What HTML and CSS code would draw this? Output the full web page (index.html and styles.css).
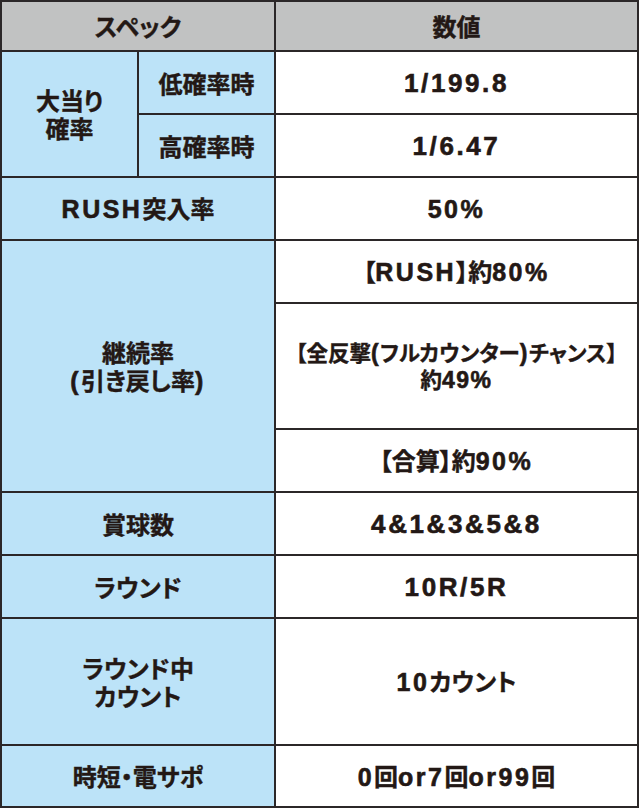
FILE: index.html
```html
<!DOCTYPE html>
<html lang="ja">
<head>
<meta charset="utf-8">
<title>スペック</title>
<link rel="stylesheet" href="styles.css">
</head>
<body>
<div class="spec">
  <div class="cell head h-spec"><div class="t">スペック</div></div>
  <div class="cell head h-val"><div class="t">数値</div></div>

  <div class="cell label oa"><div class="t">大当り<br>確率</div></div>
  <div class="cell label sub r1"><div class="t">低確率時</div></div>
  <div class="cell val r1"><div class="t"><span class="en num">1/199.8</span></div></div>
  <div class="cell label sub r2"><div class="t">高確率時</div></div>
  <div class="cell val r2"><div class="t"><span class="en num">1/6.47</span></div></div>

  <div class="cell label wide r3"><div class="t"><span class="en">RUSH</span>突入率</div></div>
  <div class="cell val r3"><div class="t"><span class="en">50%</span></div></div>

  <div class="cell label wide keizoku"><div class="t">継続率<br><span class="en">(</span>引き戻し率<span class="en">)</span></div></div>
  <div class="cell val r4"><div class="t">【<span class="en">RUSH</span>】約<span class="en">80%</span></div></div>
  <div class="cell val r5"><div class="t small">【全反撃<span class="en">(</span>フルカウンター<span class="en">)</span>チャンス】<br>約<span class="en">49%</span></div></div>
  <div class="cell val r6"><div class="t">【合算】約<span class="en">90%</span></div></div>

  <div class="cell label wide r7"><div class="t">賞球数</div></div>
  <div class="cell val r7"><div class="t"><span class="en num">4&amp;1&amp;3&amp;5&amp;8</span></div></div>

  <div class="cell label wide r8"><div class="t">ラウンド</div></div>
  <div class="cell val r8"><div class="t"><span class="en num">10R/5R</span></div></div>

  <div class="cell label wide r9"><div class="t">ラウンド中<br>カウント</div></div>
  <div class="cell val r9"><div class="t"><span class="en">10</span>カウント</div></div>

  <div class="cell label wide r10"><div class="t">時短・電サポ</div></div>
  <div class="cell val r10"><div class="t"><span class="en">0</span>回<span class="en">or7</span>回<span class="en">or99</span>回</div></div>
</div>
</body>
</html>
```

FILE: styles.css
```css
html, body {
  margin: 0;
  padding: 0;
  background: #ffffff;
}

.spec {
  width: 639px;
  box-sizing: border-box;
  display: grid;
  grid-template-columns: 135px 135px 361px;
  grid-template-rows: 48px 61px 61px 61px 61px 124px 61px 61px 61px 125px 60px;
  gap: 2px;
  padding: 2px;
  background: #2b2728;
}

.cell {
  display: flex;
  align-items: center;
  justify-content: center;
  background: #ffffff;
}

.t {
  text-align: center;
  font-family: "Noto Sans CJK JP", "Noto Sans CJK SC", sans-serif;
  font-weight: 700;
  font-size: 24px;
  line-height: 28px;
  color: #231815;
  font-feature-settings: "palt";
  -webkit-text-stroke: 0.4px #231815;
  white-space: nowrap;
}

.en {
  font-family: "Liberation Sans", Arial, sans-serif;
  font-size: 25px;
  letter-spacing: 2.5px;
  -webkit-text-stroke: 0.6px #231815;
}

.num {
  font-size: 26px;
  letter-spacing: 2.6px;
}

.t.small {
  font-size: 21.5px;
  line-height: 26px;
}

.t.small .en {
  font-size: 23px;
  letter-spacing: 1.5px;
}

.head {
  background: #c1c2c2;
  grid-row: 1;
}
.h-spec { grid-column: 1 / 3; }
.h-val { grid-column: 3; }

.label { background: #bce3f8; }
.oa { grid-column: 1; grid-row: 2 / 4; }
.sub { grid-column: 2; }
.wide { grid-column: 1 / 3; }
.val { grid-column: 3; }

.r1 { grid-row: 2; }
.r2 { grid-row: 3; }
.r3 { grid-row: 4; }
.keizoku { grid-row: 5 / 8; }
.r4 { grid-row: 5; }
.r5 { grid-row: 6; }
.r6 { grid-row: 7; }
.r7 { grid-row: 8; }
.r8 { grid-row: 9; }
.r9 { grid-row: 10; }
.r10 { grid-row: 11; }
```
